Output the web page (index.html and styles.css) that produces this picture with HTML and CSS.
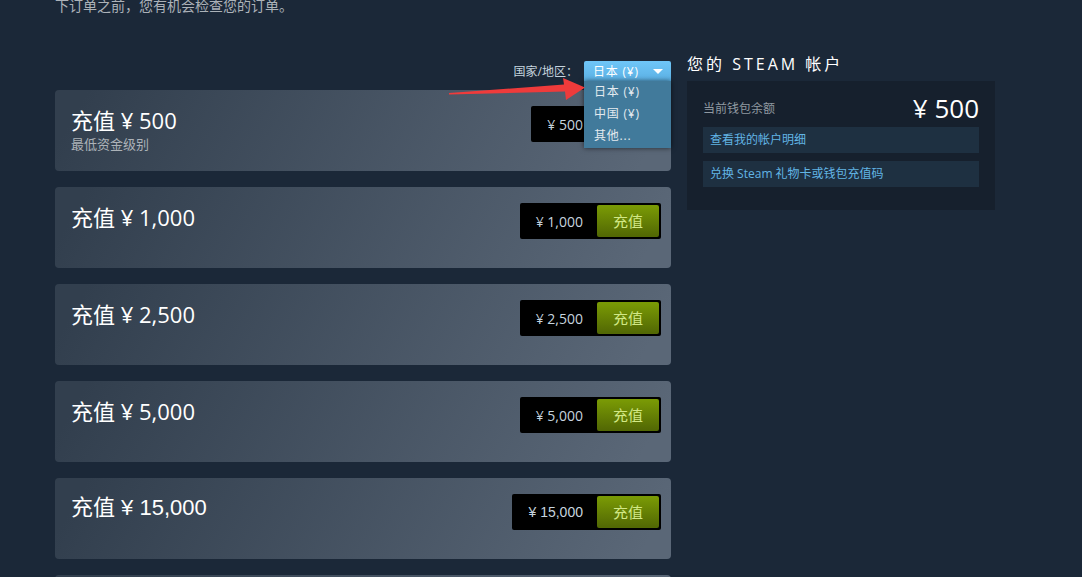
FILE: index.html
```html
<!DOCTYPE html>
<html lang="zh-CN">
<head>
<meta charset="utf-8">
<title>为您的 Steam 钱包充值</title>
<link rel="stylesheet" href="styles.css">
</head>
<body>
<div class="page">
  <p class="intro">下订单之前，您有机会检查您的订单。</p>
  <div class="layout">
    <div class="main">
      <div class="region-row">
        <span class="region-label">国家/地区：</span>
        <div class="dselect">
          <div class="trigger"><span>日本 (¥)</span><i class="caret"></i></div>
          <ul class="menu">
            <li>日本 (¥)</li>
            <li>中国 (¥)</li>
            <li>其他...</li>
          </ul>
        </div>
      </div>
      <div class="cards">
        <div class="card">
          <div class="card-info">
            <div class="card-title">充值 ¥ 500</div>
            <div class="card-sub">最低资金级别</div>
          </div>
          <div class="buy">
            <span class="price">¥ 500</span>
            <a class="btn-green">充值</a>
          </div>
        </div>
        <div class="card">
          <div class="card-info">
            <div class="card-title">充值 ¥ 1,000</div>
          </div>
          <div class="buy">
            <span class="price">¥ 1,000</span>
            <a class="btn-green">充值</a>
          </div>
        </div>
        <div class="card">
          <div class="card-info">
            <div class="card-title">充值 ¥ 2,500</div>
          </div>
          <div class="buy">
            <span class="price">¥ 2,500</span>
            <a class="btn-green">充值</a>
          </div>
        </div>
        <div class="card">
          <div class="card-info">
            <div class="card-title">充值 ¥ 5,000</div>
          </div>
          <div class="buy">
            <span class="price">¥ 5,000</span>
            <a class="btn-green">充值</a>
          </div>
        </div>
        <div class="card card-alt">
          <div class="card-info">
            <div class="card-title">充值 ¥ 15,000</div>
          </div>
          <div class="buy">
            <span class="price">¥ 15,000</span>
            <a class="btn-green">充值</a>
          </div>
        </div>
        <div class="card">
          <div class="card-info">
            <div class="card-title">充值 ¥ 30,000</div>
          </div>
          <div class="buy">
            <span class="price">¥ 30,000</span>
            <a class="btn-green">充值</a>
          </div>
        </div>
      </div>
    </div>
    <aside class="side">
      <h2 class="side-title">您的 Steam 帐户</h2>
      <div class="panel">
        <div class="balance-row">
          <span class="balance-label">当前钱包余额</span>
          <span class="balance-value">¥ 500</span>
        </div>
        <div class="links">
          <a class="panel-link">查看我的帐户明细</a>
          <a class="panel-link">兑换 Steam 礼物卡或钱包充值码</a>
        </div>
      </div>
    </aside>
  </div>
  <svg class="annot-arrow" width="150" height="35" viewBox="0 0 150 35">
    <polygon points="9,22 124,13.5 123,7 145,16.5 126,29 125,20.5 9,23.5" fill="#ef3b3b"/>
  </svg>
</div>
</body>
</html>
```
FILE: styles.css
```css
* { box-sizing: border-box; }

html, body {
  margin: 0;
  padding: 0;
  background: #1b2838;
  font-family: "Open Sans", "Noto Sans CJK SC", sans-serif;
  color: #c6d4df;
  overflow: hidden;
}

.page {
  position: relative;
  padding-left: 55px;
}

.intro {
  margin: -4px 0 0;
  font-size: 14px;
  line-height: 20px;
  color: #acb2b8;
}

.layout {
  margin-top: 36px;
  display: grid;
  grid-template-columns: 616px 308px;
  column-gap: 16px;
  align-items: start;
}

.region-row {
  margin-top: 9px;
  height: 20px;
  display: flex;
  justify-content: flex-end;
  align-items: center;
  gap: 6px;
}

.region-label {
  font-size: 12px;
  color: #c6d4df;
}

.dselect {
  position: relative;
  width: 87px;
  z-index: 5;
}

.trigger {
  height: 20px;
  display: flex;
  align-items: center;
  justify-content: space-between;
  padding: 0 8px 0 9px;
  font-size: 12px;
  letter-spacing: 0.8px;
  color: #ffffff;
  background: linear-gradient(to bottom, #6fc6f8 0%, #5cb1e4 100%);
  border-radius: 2px 2px 0 0;
}

.caret {
  display: block;
  width: 0;
  height: 0;
  border-left: 5px solid transparent;
  border-right: 5px solid transparent;
  border-top: 5px solid #ffffff;
}

.menu {
  position: absolute;
  top: 20px;
  left: 0;
  width: 87px;
  margin: 0;
  padding: 0 0 1px;
  list-style: none;
  background: #417a9b;
  box-shadow: 0 0 5px rgba(0, 0, 0, 0.6);
}

.menu li {
  height: 22px;
  line-height: 22px;
  padding-left: 10px;
  font-size: 12px;
  letter-spacing: 0.8px;
  color: #e4eaef;
}

.cards {
  margin-top: 9px;
  display: flex;
  flex-direction: column;
  gap: 16px;
}

.card {
  height: 81px;
  flex-shrink: 0;
  display: flex;
  justify-content: space-between;
  align-items: flex-start;
  padding: 16px 10px 0 16px;
  border-radius: 4px;
  background: linear-gradient(-60deg, #5a6777 5%, #323f4e 95%);
}

.card-title {
  font-size: 22px;
  line-height: 28px;
  color: #ffffff;
}

.card-sub {
  font-size: 13px;
  line-height: 20px;
  color: #acb2b8;
}

.buy {
  display: flex;
  align-items: center;
  padding: 2px;
  background: #000000;
  border-radius: 2px;
}

.price {
  padding: 0 14px;
  font-size: 14px;
  color: #c6d4df;
}

.btn-green {
  display: block;
  height: 32px;
  line-height: 32px;
  padding: 0 16px;
  font-size: 15px;
  color: #d2e885;
  background: linear-gradient(to bottom, #799905 5%, #536904 95%);
  border-radius: 2px;
}

.card-alt .card-title,
.card-alt .price {
  font-family: "Liberation Sans", "Noto Sans CJK SC", sans-serif;
}

.side-title {
  margin: 0 0 5px;
  font-size: 16px;
  line-height: 24px;
  font-weight: normal;
  letter-spacing: 3px;
  text-transform: uppercase;
  color: #ffffff;
}

.panel {
  background: #16202d;
  padding: 14px 16px 23px;
}

.balance-row {
  height: 26px;
  display: flex;
  justify-content: space-between;
  align-items: center;
}

.balance-label {
  font-size: 12px;
  color: #8f98a0;
}

.balance-value {
  font-size: 26px;
  color: #ffffff;
}

.links {
  margin-top: 6px;
  display: flex;
  flex-direction: column;
  gap: 8px;
}

.panel-link {
  display: block;
  height: 26px;
  line-height: 26px;
  padding: 0 7px;
  font-size: 12px;
  color: #62b5e5;
  background: #1e3041;
}

.annot-arrow {
  position: absolute;
  left: 440px;
  top: 75px;
  z-index: 10;
}
```
